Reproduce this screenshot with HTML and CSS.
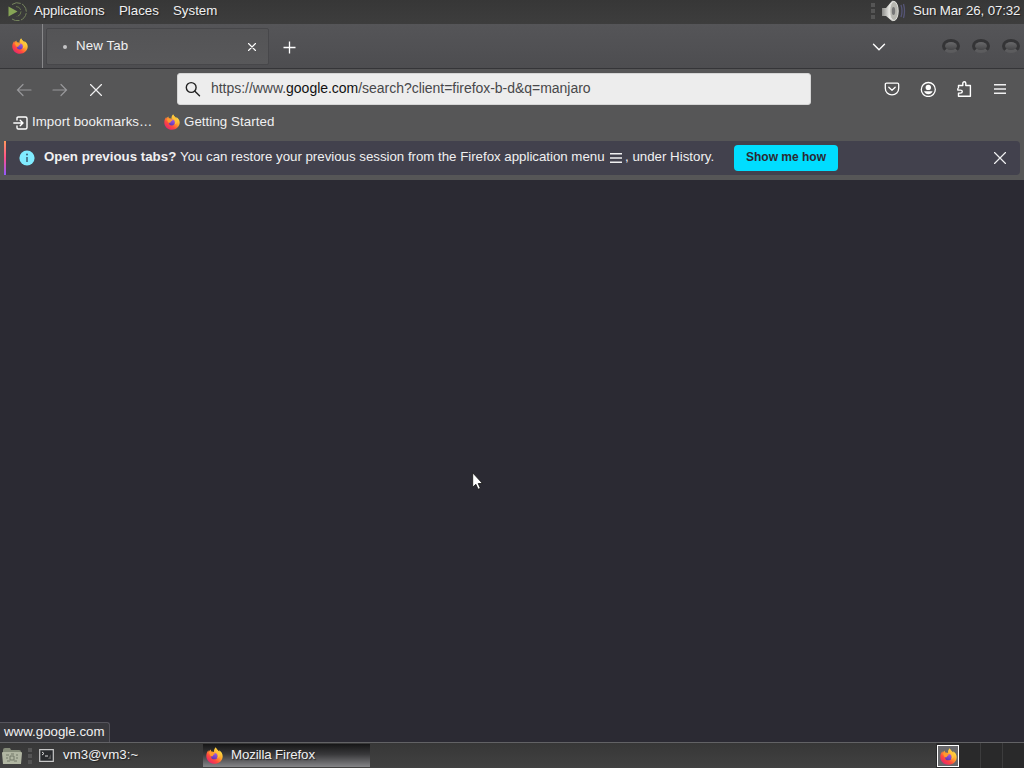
FILE: index.html
```
<!DOCTYPE html>
<html lang="en">
<head>
  <meta charset="UTF-8">
  <title>Mozilla Firefox</title>
  <link rel="stylesheet" href="styles.css">
</head>
<body>

  <!-- Shared icons -->
  <svg class="defs" width="0" height="0">
    <defs>
      <linearGradient id="flame" x1="0.85" y1="0.1" x2="0.2" y2="0.95">
        <stop offset="0" stop-color="#fff04a"/>
        <stop offset="0.4" stop-color="#ffa52d"/>
        <stop offset="0.7" stop-color="#ff4a3d"/>
        <stop offset="1" stop-color="#e6246f"/>
      </linearGradient>
      <linearGradient id="globe" x1="0.7" y1="0" x2="0.3" y2="1">
        <stop offset="0" stop-color="#a05ae8"/>
        <stop offset="1" stop-color="#5b35b0"/>
      </linearGradient>
      <symbol id="firefox" viewBox="0 0 16 16">
        <path fill="url(#flame)" d="M9.2 0.2c.3 1.5 1.3 2.1 2.2 3 .5.5.8.9 1 1.4.1-.6 0-1.2-.2-1.6 1.900 1 3.500 3 3.500 5.600 0 4-3.400 7.200-7.700 7.200S.3 12.600.3 8.500c0-2.200.7-3.900 2-5.400 0 .6.1 1 .3 1.400.4-.9 1.100-1.700 1.900-2.100-.1.700.1 1.300.5 1.800 1-.1 1.900.1 2.600.6C7.200 3.100 8 1.300 9.200.2z"/>
        <circle cx="7.800" cy="8.600" r="3" fill="url(#globe)"/>
        <path fill="#ff9a2c" d="M2.800 5.200c1.300-.9 3-.7 4.100.4l1.700.4c-.2.900-1.500 1.100-1.800 1.500-.3.500-.2 1-.6 1.200-.8.200-1.600.1-2.100-.4z"/>
        <path fill="#ffc33a" d="M9.300.8c-1 1.700-.6 3.200.7 4.300 1.500 1.200 1.900 3.500.6 5.300 2-.7 3-2.500 2.500-4.500C12.500 3.800 10 3 9.300.8z"/>
      </symbol>
      <symbol id="menu" viewBox="0 0 12 10">
        <path d="M0 .8h12M0 5h12M0 9.200h12" stroke="currentColor" stroke-width="1.4"/>
      </symbol>
      <symbol id="cross" viewBox="0 0 12 12">
        <path d="M.5.5l11 11M11.500.5l-11 11" stroke="currentColor" stroke-width="1.200" stroke-linecap="round"/>
      </symbol>
      <linearGradient id="metal">
        <stop offset="0" stop-color="#8b8b88"/>
        <stop offset="0.5" stop-color="#eeeeea"/>
        <stop offset="1" stop-color="#777774"/>
      </linearGradient>
    </defs>
  </svg>

  <!-- Desktop top panel -->
  <div class="panel">
    <svg class="mate" width="20" height="20" viewBox="0 0 20 20" fill="none">
      <path d="M1.500 5.500l9 5-9 5z" fill="#87a556"/>
      <path d="M5 3.500A9 9 0 1 1 5 18" stroke="#76855d" stroke-dasharray="9 1.500"/>
      <path d="M9 5.500a5 5 0 1 1 0 10" stroke="#68774f" stroke-dasharray="6 1.500"/>
    </svg>
    <span class="menu-item apps">Applications</span>
    <span class="menu-item places">Places</span>
    <span class="menu-item">System</span>
    <span class="grip"></span>
    <svg class="speaker" width="24" height="22" viewBox="0 0 24 22">
      <path d="M0 8h4l6-7c4-1 6 4 6 10s-3 11-6 10l-6-5H0z" fill="url(#metal)"/>
      <ellipse cx="12" cy="11" rx="4.200" ry="9.500" fill="#b7b7b0" stroke="#e0e0db"/>
      <ellipse cx="11.500" cy="11" rx="1.700" ry="4" fill="#777"/>
      <path d="M19 5q2 6 0 12M21.500 4q2 7 0 14" fill="none" stroke="#555577" stroke-width="1.300"/>
    </svg>
    <span class="clock">Sun Mar 26, 07:32</span>
  </div>

  <!-- Tabs -->
  <div class="tabbar">
    <div class="home"><svg width="16" height="16"><use href="#firefox"/></svg></div>
    <div class="tab">
      <span class="dot"></span>
      <span class="tab-title">New Tab</span>
      <svg class="tab-close" width="8" height="8" viewBox="0 0 8 8"><path d="M.5.5l7 7M7.500.5l-7 7" stroke="#fff" stroke-width="1.100" stroke-linecap="round"/></svg>
    </div>
    <svg class="plus" width="13" height="13" viewBox="0 0 13 13"><path d="M6.500.5v12M.5 6.500h12" stroke="#fff" stroke-width="1.300"/></svg>
    <svg class="chevron" width="14" height="8" viewBox="0 0 14 8" fill="none"><path d="M1.500 1.200L7 6.700l5.500-5.500" stroke="#fff" stroke-width="1.400" stroke-linecap="round"/></svg>
    <div class="window-btns">
      <span class="wbtn"></span>
      <span class="wbtn"></span>
      <span class="wbtn"></span>
    </div>
  </div>

  <!-- Address bar -->
  <div class="navbar">
    <svg class="arrow" width="16" height="14" viewBox="0 0 16 14" fill="none"><path d="M15 7H1.500M7 1.500L1.500 7 7 12.500" stroke="#98989b" stroke-width="1.200" stroke-linecap="round"/></svg>
    <svg class="arrow fwd" width="16" height="14" viewBox="0 0 16 14" fill="none"><path d="M1 7h13.500M9 1.500L14.500 7 9 12.500" stroke="#98989b" stroke-width="1.200" stroke-linecap="round"/></svg>
    <svg class="stop" width="12" height="12"><use href="#cross"/></svg>
    <div class="urlbar">
      <svg width="16" height="16" viewBox="0 0 16 16" fill="none" stroke="#222" stroke-width="1.400" stroke-linecap="round"><circle cx="6.200" cy="6.500" r="4.900"/><path d="M9.900 10.200l4.600 4.600"/></svg>
      <span class="url">https://www.<b>google.com</b>/search?client=firefox-b-d&amp;q=manjaro</span>
    </div>
    <div class="tools">
      <svg width="16" height="16" viewBox="0 0 16 16" fill="none" stroke="#fff" stroke-width="1.300" stroke-linecap="round" stroke-linejoin="round"><path d="M2.500 2.200h11q1.200 0 1.200 1.200v3.800c0 3.900-2.900 6.600-6.700 6.600S1.300 11.100 1.300 7.200V3.400q0-1.200 1.200-1.200z"/><path d="M4.800 6.200L8 9.200l3.200-3"/></svg>
      <svg width="16" height="16" viewBox="0 0 16 16" fill="none" stroke="#fff" stroke-width="1.300"><circle cx="8.300" cy="8.500" r="7"/><circle cx="8.300" cy="6.400" r="2.700" fill="#fff" stroke="none"/><path d="M4 10.200h8.600c-.8 2-2.400 3-4.300 3s-3.500-1-4.300-3z" fill="#fff" stroke="none"/></svg>
      <svg width="16" height="16" viewBox="0 0 16 16" fill="none" stroke="#fff" stroke-width="1.400" stroke-linejoin="round"><path d="M2.500 7.300V4.500h4.300V2.300C6.800 1.400 7.500.7 8.300.7s1.500.7 1.500 1.600v2.200h4.600v10.800H2.500v-3.200h1.900c1 0 1.900-.6 1.900-1.500s-.9-1.500-1.900-1.500H1.800V7.300"/></svg>
      <svg class="burger" width="12" height="10"><use href="#menu"/></svg>
    </div>
  </div>

  <!-- Bookmarks -->
  <div class="bookmarks">
    <svg class="import-icon" width="16" height="14" viewBox="0 0 16 14" fill="none" stroke="#fff" stroke-width="1.400" stroke-linecap="round" stroke-linejoin="round"><path d="M4 4V2.200q0-1.200 1.200-1.200h7.300q1.500 0 1.500 1.500v9q0 1.500-1.500 1.500H5.200Q4 13 4 11.800V10M.8 7h9M7.200 4.200L10 7 7.200 9.800"/></svg>
    <span class="import">Import bookmarks…</span>
    <svg class="fx" width="16" height="16"><use href="#firefox"/></svg>
    <span class="started">Getting Started</span>
  </div>

  <!-- Restore session message -->
  <div class="notice-row">
    <div class="notice">
      <svg class="info" width="16" height="16" viewBox="0 0 16 16"><circle cx="8" cy="8" r="7.600" fill="#80ebff"/><path d="M8 7v5" stroke="#35546a" stroke-width="1.400"/><circle cx="8" cy="4.500" r=".9" fill="#35546a"/></svg>
      <span class="ask">Open previous tabs?</span>
      <span class="message">You can restore your previous session from the Firefox application menu</span>
      <svg class="inline-menu" width="12" height="10"><use href="#menu"/></svg>
      <span class="under">, under History.</span>
      <button class="show-btn">Show me how</button>
      <svg class="notice-close" width="12" height="12"><use href="#cross"/></svg>
    </div>
  </div>

  <div class="page">
    <div class="status">www.google.com</div>
    <svg class="cursor" width="12" height="19" viewBox="0 0 12 19"><path d="M.7.8v14.400l3.200-2.900 2.200 5 2.300-1-2.200-4.800h4.300z" fill="#fff" stroke="#111" stroke-width=".8"/></svg>
  </div>

  <!-- Desktop bottom panel -->
  <div class="taskbar">
    <svg class="folder" width="20" height="18" viewBox="0 0 20 18">
      <path d="M1 3q0-2 2-2h5l1 2h8q2 0 2 2v11q0 1-1 1H2q-1 0-1-1z" fill="#858b79"/>
      <path d="M0 6q0-1 1-1h18q1 0 1 1l-1 11H1z" fill="#b1b6a2"/>
      <path d="M4 8h3M9 7h3M14 8h2M4 11h2M14 11h2M5 14h3M12 14h3M8 9h4v4H8z" fill="none" stroke="#727969"/>
    </svg>
    <span class="grip"></span>
    <svg class="term" width="15" height="13" viewBox="0 0 15 13" fill="none"><path d="M.7.7h13.600v11.600H.7z" fill="#292b2e" stroke="#c8c8c8" stroke-width="1.200"/><path d="M3 3l2 1.500L3 6M6 7h3" stroke="#ddd"/><path d="M9 10l3-5v5z" fill="#555"/></svg>
    <span class="term-title">vm3@vm3:~</span>
    <div class="task">
      <svg width="17" height="17"><use href="#firefox"/></svg>
      <span>Mozilla Firefox</span>
    </div>
    <div class="workspaces">
      <div class="workspace current"><span class="thumb"><svg width="17" height="17"><use href="#firefox"/></svg></span></div>
      <div class="workspace"></div>
      <div class="workspace"></div>
    </div>
  </div>

</body>
</html>
```
FILE: styles.css
```
* {
  box-sizing: border-box;
}

body {
  margin: 0;
  width: 1024px;
  height: 768px;
  overflow: hidden;
  display: flex;
  flex-direction: column;
  background: #2b2a33;
  color: #f0f0f1;
  font-family: "Liberation Sans", sans-serif;
  font-size: 13.3px;
  line-height: 16px;
  white-space: nowrap;
}

svg {
  display: block;
  flex-shrink: 0;
}

.defs {
  position: absolute;
}

span {
  flex-shrink: 0;
}

.panel {
  height: 24px;
  display: flex;
  align-items: center;
  padding: 0 3px 2px 7px;
  background: linear-gradient(#373737, #3d3d3d);
  text-shadow: 1px 1px 1px #222;
}

.apps {
  width: 85px;
  margin-left: 7px;
  letter-spacing: -0.1px;
}

.places {
  width: 54px;
}

.grip {
  width: 4px;
  height: 16px;
  background: repeating-linear-gradient(#555 0 4px, transparent 4px 6px);
}

.panel .grip {
  margin-left: auto;
}

.speaker {
  margin-left: 7px;
}

.clock {
  width: 108px;
  margin-left: 7px;
  letter-spacing: -0.12px;
}

.tabbar {
  height: 45px;
  display: flex;
  align-items: center;
  background: linear-gradient(#555558, #4d4d50);
  border-bottom: 1px solid #353538;
}

.home {
  width: 43px;
  height: 44px;
  padding: 14px 0 0 12px;
  border-right: 1px solid #88888a;
}

.tab {
  width: 223px;
  height: 37px;
  margin: 0 0 0 3px;
  padding: 0 12px 0 16px;
  display: flex;
  align-items: center;
  background: linear-gradient(#545456, #58585a);
  border: 1px solid #47474a;
  border-radius: 2px;
}

.dot {
  width: 4px;
  height: 4px;
  margin: 2px 9px 0 0;
  border-radius: 50%;
  background: #c4c4c6;
}

.tab-title {
  letter-spacing: 0.1px;
}

.tab-close {
  margin-left: auto;
  margin-top: 2px;
}

.plus {
  margin: 2px 0 0 14px;
}

.chevron {
  margin: 1px 0 0 576px;
}

.window-btns {
  display: flex;
  gap: 12px;
  margin-left: 56px;
}

.wbtn {
  width: 18px;
  height: 14px;
  border: 3px solid #343436;
  border-bottom-color: #5c5c5e;
  border-radius: 50%;
  background: linear-gradient(#69696b, #464648);
}

.navbar {
  height: 39px;
  display: flex;
  align-items: center;
  padding: 0 18px 0 16px;
  background: #565657;
}

.arrow {
  margin-top: 3px;
}

.fwd {
  margin-left: 20px;
}

.stop {
  margin: 3px 0 0 22px;
}

.urlbar {
  width: 634px;
  height: 32px;
  margin-left: 75px;
  padding: 0 7px;
  display: flex;
  align-items: center;
  gap: 10px;
  background: #ededed;
  border: 1px solid #d5d5d5;
  border-radius: 3px;
  color: #48484a;
}

.url {
  font-size: 14px;
  letter-spacing: -0.03px;
  padding-bottom: 2px;
}

.url b {
  font-weight: normal;
  color: #111;
}

.tools {
  display: flex;
  align-items: center;
  gap: 20px;
  margin-left: auto;
}

.tools .burger {
  margin-left: 2px;
}

.bookmarks {
  height: 33px;
  display: flex;
  align-items: center;
  padding: 0 13px 5px;
  background: #565657;
}

.import-icon {
  margin-top: 2px;
}

.import {
  width: 120px;
  margin: 0 12px 0 3px;
  letter-spacing: 0.04px;
}

.started {
  margin-left: 4px;
  letter-spacing: 0.06px;
}

.notice-row {
  height: 39px;
  padding: 0 4px 5px;
  background: #565657;
}

.notice {
  height: 34px;
  display: flex;
  align-items: center;
  padding: 0 14px 3px;
  background: linear-gradient(#ff9a5c, #ff4f8b 50%, #9059ff) 0 0 / 2px 100% no-repeat, #42414d;
  border-radius: 0 4px 4px 0;
}

.info {
  margin: 2px 0 0 1px;
}

.ask {
  width: 132px;
  margin: 0 4px 0 9px;
  font-weight: bold;
}

.message {
  width: 425px;
  letter-spacing: -0.02px;
}

.inline-menu {
  margin: 3px 3px 0 5px;
}

.under {
  width: 91px;
}

.show-btn {
  width: 104px;
  height: 26px;
  margin: 2px 0 0 18px;
  padding: 0 0 2px;
  border: 0;
  border-radius: 4px;
  background: #00ddff;
  color: #2b2a33;
  font: bold 12px "Liberation Sans", sans-serif;
}

.notice-close {
  margin: 2px 0 0 auto;
}

.page {
  position: relative;
  flex: 1;
  display: flex;
  align-items: flex-end;
  background: #2b2a33;
}

.status {
  width: 110px;
  height: 20px;
  padding: 1px 4px;
  border: solid #55545c;
  border-width: 1px 1px 0 0;
  border-radius: 0 3px 0 0;
  background: #38383d;
}

/* Mouse pointer over the page */
.cursor {
  position: absolute;
  left: 472px;
  top: 292px;
}

.taskbar {
  height: 26px;
  display: flex;
  align-items: center;
  padding-left: 2px;
  border-top: 1px solid #626265;
  background: linear-gradient(#373737, #414141);
  text-shadow: 1px 1px 1px #222;
}

.taskbar .grip {
  margin-left: 6px;
}

.term {
  margin-left: 7px;
}

.term-title {
  width: 140px;
  margin-left: 9px;
  padding-bottom: 2px;
}

.task {
  width: 167px;
  height: 23px;
  display: flex;
  align-items: center;
  gap: 8px;
  padding: 0 0 1px 3px;
  background: linear-gradient(#161617, #39393b 45%, #858588);
}

.task span {
  padding-bottom: 1px;
  letter-spacing: -0.12px;
}

.workspaces {
  display: flex;
  height: 25px;
  margin-left: auto;
  background: #29292a;
}

.workspace {
  width: 22px;
  border-left: 1px solid #3c3c3d;
}

.current {
  width: 44px;
  border: 0;
}

.thumb {
  width: 22px;
  height: 22px;
  display: flex;
  align-items: center;
  justify-content: center;
  margin: 2px 0 0 1px;
  border: 1px solid #fff;
  background: #68686b;
}
```
